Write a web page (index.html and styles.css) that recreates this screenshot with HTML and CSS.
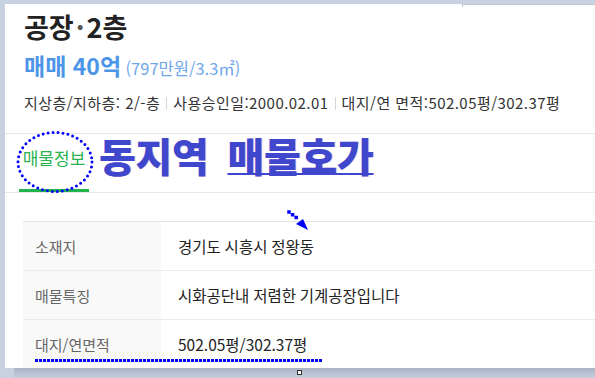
FILE: index.html
```html
<!DOCTYPE html>
<html lang="ko">
<head>
  <meta charset="UTF-8">
  <title>공장·2층</title>
  <link rel="stylesheet" href="styles.css">
</head>
<body>
  <div class="top-edge"></div>

  <!-- Listing panel -->
  <div class="panel">
    <div class="summary">
      <h1 class="title">공장<span class="dot">·</span>2층</h1>
      <div class="price">
        <strong>매매 40억</strong>
        <span class="unit-price">(797만원/3.3㎡)</span>
      </div>
      <div class="meta">
        <span>지상층/지하층: 2/-층</span>
        <span class="sep"></span>
        <span>사용승인일:2000.02.01</span>
        <span class="sep"></span>
        <span>대지/연 면적:502.05평/302.37평</span>
      </div>
    </div>

    <div class="tabs">
      <div class="tab active">매물정보</div>
    </div>

    <table class="info-table">
      <tr>
        <th>소재지</th>
        <td>경기도 시흥시 정왕동</td>
      </tr>
      <tr>
        <th>매물특징</th>
        <td>시화공단내 저렴한 기계공장입니다</td>
      </tr>
      <tr>
        <th>대지/연면적</th>
        <td>502.05평/302.37평</td>
      </tr>
    </table>

    <!-- Annotations -->
    <svg class="mark-circle" width="80" height="64" viewBox="0 0 80 64">
      <ellipse cx="40" cy="32" rx="37" ry="29.5" fill="none" stroke="#0000ff" stroke-width="3" stroke-dasharray="0 5" stroke-linecap="round"/>
    </svg>
    <div class="mark-title">동지역 <u>매물호가</u></div>
    <svg class="mark-arrow" width="28" height="28" viewBox="0 0 28 28">
      <line x1="4" y1="4" x2="12" y2="10" stroke="#0000ff" stroke-width="3.5" stroke-dasharray="0 4.5" stroke-linecap="square"/>
      <polygon points="11,16 18,11 23,22" fill="#0000ff"/>
    </svg>
    <div class="mark-underline"></div>
  </div>

  <div class="bottom-edge">
    <span class="handle"></span>
  </div>
</body>
</html>
```

FILE: styles.css
```css
/* General */
body {
  margin: 0;
  background: #c8d1e2;
  font-family: "Noto Sans CJK KR", "Noto Sans", sans-serif;
  color: #222;
  overflow: hidden;
}

.top-edge {
  height: 4px;
  position: relative;
}

.top-edge::after {
  content: "";
  position: absolute;
  left: 462px;
  right: 0;
  top: 4px;
  height: 2px;
  border-top: 1px solid #c4c4c4;
  border-left: 1px solid #c4c4c4;
  z-index: 2;
}

/* Panel */
.panel {
  position: relative;
  margin-left: 5px;
  height: 364px;
  background: #fff;
  overflow: hidden;
}

.summary {
  padding: 5px 0 0 19px;
  height: 124px;
}

.title {
  margin: 0;
  font-size: 27px;
  font-weight: 700;
  line-height: 36px;
  color: #222;
}

.title .dot {
  color: #555;
  margin: 0 2px;
}

.price {
  margin-top: 4px;
  line-height: 32px;
  color: #4d95e8;
}

.price strong {
  font-size: 23px;
  font-weight: 700;
}

.unit-price {
  font-size: 16.5px;
  color: #6fa6ea;
}

.meta {
  margin-top: 9px;
  font-size: 15px;
  line-height: 20px;
  color: #333;
  display: flex;
  align-items: center;
  letter-spacing: 0.45px;
  white-space: nowrap;
}

.meta .sep {
  width: 1px;
  height: 13px;
  background: #d6d6d6;
  margin: 0 6px;
}

/* Tabs */
.tabs {
  border-top: 1px solid #e6e6e6;
  border-bottom: 1px solid #e6e6e6;
  height: 58px;
  display: flex;
  align-items: flex-end;
}

.tab {
  margin-left: 14px;
  width: 70px;
  padding-bottom: 19px;
  text-align: center;
  font-size: 17px;
  line-height: 24px;
  color: #2ab24f;
  border-bottom: 3px solid #22b34c;
}

/* Info table */
.info-table {
  margin: 28px 0 0 18px;
  width: calc(100% - 18px);
  border-collapse: collapse;
  border-top: 1px solid #e4e4e4;
}

.info-table th,
.info-table td {
  height: 48px;
  padding: 0;
  border-bottom: 1px solid #ebebeb;
  text-align: left;
  font-weight: 400;
}

.info-table th {
  width: 126px;
  padding-left: 12px;
  background: #f9f9f9;
  color: #666;
  font-size: 15px;
}

.info-table td {
  padding-left: 17px;
  color: #222;
  font-size: 15.5px;
  word-spacing: -0.5px;
}

/* Annotations drawn over the page */
.mark-circle {
  position: absolute;
  left: 10px;
  top: 126px;
}

.mark-title {
  position: absolute;
  left: 94px;
  top: 125px;
  font-size: 40px;
  font-weight: 900;
  line-height: 52px;
  color: #3f48cc;
  letter-spacing: -0.3px;
  white-space: nowrap;
  text-shadow: 1px 0 0 rgba(230, 110, 180, 0.35);
}

.mark-title u {
  margin-left: 8px;
  text-decoration-thickness: 2px;
  text-underline-offset: 1px;
}

.mark-arrow {
  position: absolute;
  left: 280px;
  top: 204px;
}

.mark-underline {
  position: absolute;
  left: 30px;
  top: 355px;
  width: 288px;
  height: 3px;
  background: repeating-linear-gradient(90deg, #0000ff 0 3px, transparent 3px 4px);
}

/* Bottom shadow strip */
.bottom-edge {
  position: relative;
  margin-left: 14px;
  height: 10px;
  background: linear-gradient(#a9b4c7, #c4cddc);
}

.handle {
  position: absolute;
  left: 283px;
  top: 2px;
  width: 3px;
  height: 3px;
  border: 1px solid #333;
  background: #fff;
}
```
